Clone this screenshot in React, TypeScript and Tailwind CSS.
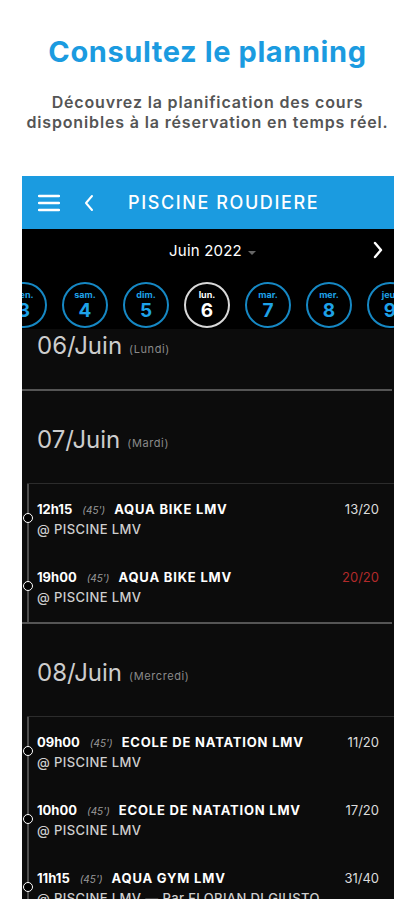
import React from "react";

const FONT = { fontFamily: "Inter, 'Noto Sans', sans-serif" };

type Session = {
  time: string;
  title: string;
  count: string;
  full?: boolean;
  place: string;
};

type Day = {
  date: string;
  name: string;
  sessions: Session[];
};

const days: Day[] = [
  { date: "06/Juin", name: "(Lundi)", sessions: [] },
  {
    date: "07/Juin",
    name: "(Mardi)",
    sessions: [
      { time: "12h15", title: "AQUA BIKE LMV", count: "13/20", place: "@ PISCINE LMV" },
      { time: "19h00", title: "AQUA BIKE LMV", count: "20/20", full: true, place: "@ PISCINE LMV" },
    ],
  },
  {
    date: "08/Juin",
    name: "(Mercredi)",
    sessions: [
      { time: "09h00", title: "ECOLE DE NATATION LMV", count: "11/20", place: "@ PISCINE LMV" },
      { time: "10h00", title: "ECOLE DE NATATION LMV", count: "17/20", place: "@ PISCINE LMV" },
      {
        time: "11h15",
        title: "AQUA GYM LMV",
        count: "31/40",
        place: "@ PISCINE LMV — Par FLORIAN DI GIUSTO",
      },
    ],
  },
];

const circles = [
  { d: "ven.", n: "3" },
  { d: "sam.", n: "4" },
  { d: "dim.", n: "5" },
  { d: "lun.", n: "6", active: true },
  { d: "mar.", n: "7" },
  { d: "mer.", n: "8" },
  { d: "jeu.", n: "9" },
];

const SessionRow = ({ s }: { s: Session }) => (
  <div className="relative flex flex-col pl-[8px] pr-[15px]">
    <div className="absolute left-[-6px] top-[14px] h-[10px] w-[10px] rounded-full border-[1.5px] border-white bg-black" />
    <div className="flex h-[20px] items-center whitespace-nowrap pt-[2px]">
      <span className="text-[13px] font-bold text-white">{s.time}</span>
      <span className="ml-[10px] text-[10px] italic text-[#9a9a9a]">(45')</span>
      <span className="ml-[9px] text-[13px] font-bold tracking-[0.8px] text-white">{s.title}</span>
      <span className={`ml-auto text-[13px] ${s.full ? "text-[#b22a2a]" : "text-[#dcdcdc]"}`}>
        {s.count}
      </span>
    </div>
    <div className="flex h-[20px] items-center whitespace-nowrap pt-[2px] text-[13px] font-medium tracking-[0.4px] text-[#cfcfcf]">
      {s.place}
    </div>
  </div>
);

const DayBlock = ({ day, last }: { day: Day; last: boolean }) => (
  <div>
    <div className="flex h-[92px] items-center pl-[15px] pt-[6px]">
      <span className="text-[24px] text-[#cdcdcd]">{day.date}</span>
      <span className="ml-[7px] mt-[6px] text-[11px] tracking-[0.6px] text-[#8a8a8a]">{day.name}</span>
    </div>
    {day.sessions.length > 0 && (
      <div className="ml-[5px] border-t border-[#2c2c2c]">
        <div className="flex flex-col gap-[28px] border-l-2 border-[#4d4d4d] py-[15px]">
          {day.sessions.map((s, i) => (
            <SessionRow key={i} s={s} />
          ))}
        </div>
      </div>
    )}
    {!last && <div className="mr-[2px] h-[2px] bg-[#555]" />}
  </div>
);

export default function App() {
  return (
    <div className="min-h-screen bg-white" style={FONT}>
      <div className="pt-[34px] text-center">
        <h1 className="text-[29px] font-bold leading-[36px] tracking-[0.6px] text-[#1b9be0]">
          Consultez le planning
        </h1>
        <p className="mt-[22px] text-[16px] font-semibold leading-[20px] tracking-[0.85px] text-[#555]">
          Découvrez la planification des cours
          <br />
          disponibles à la réservation en temps réel.
        </p>
      </div>

      <div className="ml-[22px] mt-[44px] w-[372px] bg-[#0c0c0c]">
        {/* app bar */}
        <div className="flex h-[53px] items-center bg-[#1b9be0] px-[16px]">
          <svg width="22" height="18" viewBox="0 0 22 18" className="text-white">
            <path d="M1 2h20M1 9h20M1 16h20" stroke="currentColor" strokeWidth="2.4" strokeLinecap="round" />
          </svg>
          <svg width="12" height="18" viewBox="0 0 12 18" className="ml-[23px] text-white">
            <path d="M9 2L3 9l6 7" fill="none" stroke="currentColor" strokeWidth="2" strokeLinecap="round" strokeLinejoin="round" />
          </svg>
          <span className="ml-[33px] text-[18px] font-medium tracking-[1.6px] text-white">
            PISCINE ROUDIERE
          </span>
        </div>

        {/* calendar */}
        <div className="bg-black">
          <div className="relative flex h-[45px] items-center justify-center pl-[10px]">
            <span className="text-[15px] tracking-[0.2px] text-white">Juin 2022</span>
            <svg width="10" height="6" viewBox="0 0 10 6" className="ml-[5px] mt-[2px]">
              <path d="M1 1h8L5 5z" fill="#666" />
            </svg>
            <svg width="12" height="18" viewBox="0 0 12 18" className="absolute right-[10px] top-[12px]">
              <path d="M3 2l6 7-6 7" fill="none" stroke="white" strokeWidth="2.4" strokeLinecap="round" strokeLinejoin="round" />
            </svg>
          </div>
          <div className="h-[55px] overflow-hidden pt-[8px]">
            <div className="ml-[-21px] flex gap-[15px]">
              {circles.map((c) => (
                <div
                  key={c.n}
                  className={`flex h-[46px] w-[46px] shrink-0 flex-col items-center justify-center rounded-full border-2 ${
                    c.active ? "border-[#d8d8d8] text-white" : "border-[#1688c4] text-[#1ea2e8]"
                  }`}
                >
                  <span className="text-[9px] font-bold leading-[11px]">{c.d}</span>
                  <span className="text-[19px] font-bold leading-[21px]">{c.n}</span>
                </div>
              ))}
            </div>
          </div>
        </div>

        {/* list, scrolled a little */}
        <div className="h-[570px] overflow-hidden">
          <div className="mt-[-32px]">
            {days.map((d, i) => (
              <DayBlock key={d.date} day={d} last={i === days.length - 1} />
            ))}
          </div>
        </div>
      </div>
    </div>
  );
}
